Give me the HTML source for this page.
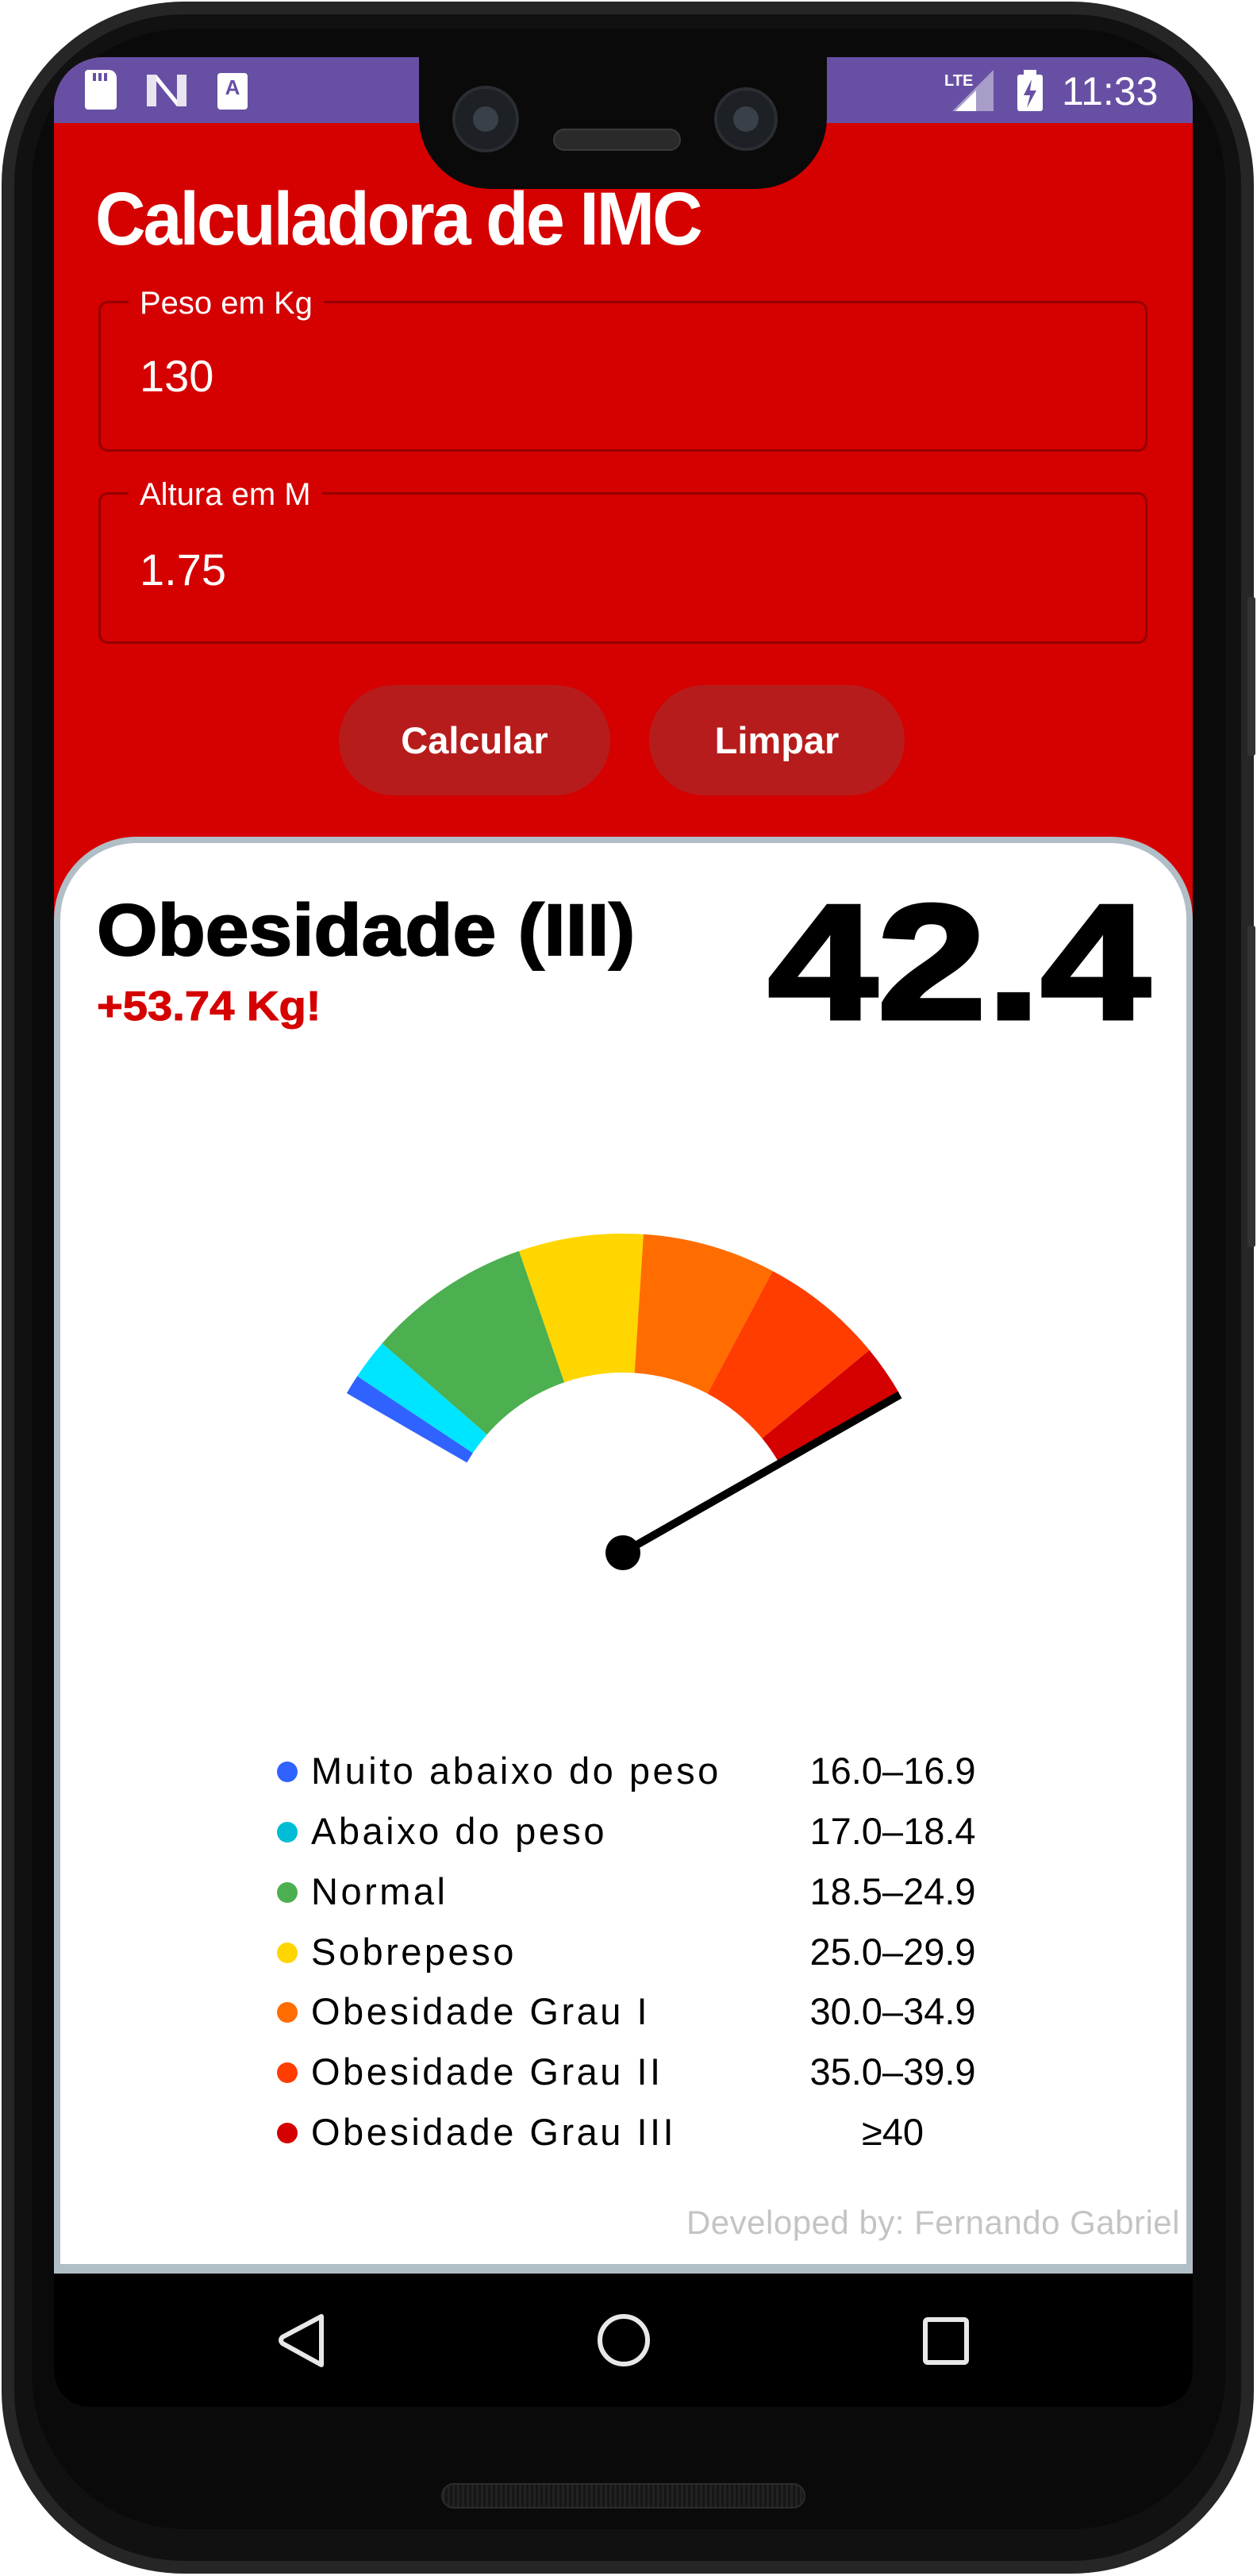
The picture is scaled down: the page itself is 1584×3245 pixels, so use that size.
<!DOCTYPE html>
<html><head><meta charset="utf-8"><style>
*{margin:0;padding:0;box-sizing:border-box}
html,body{width:1584px;height:3245px;background:#fff;overflow:hidden;font-family:"Liberation Sans",sans-serif}
.abs{position:absolute}
</style></head><body>
<div class="abs" style="left:0;top:0;width:1584px;height:3245px;background:#fff"></div>
<!-- phone body -->
<div class="abs" style="left:2px;top:2px;width:1578px;height:3240px;border-radius:230px;background:#262626"></div>
<div class="abs" style="left:18px;top:18px;width:1546px;height:3208px;border-radius:215px;background:#111"></div>
<div class="abs" style="left:40px;top:36px;width:1504px;height:3150px;border-radius:195px;background:#0a0a0a"></div>
<!-- side buttons -->
<div class="abs" style="left:1572px;top:752px;width:10px;height:200px;background:#333;border-radius:3px"></div>
<div class="abs" style="left:1572px;top:1166px;width:10px;height:405px;background:#333;border-radius:3px"></div>
<!-- screen -->
<div class="abs" style="left:68px;top:72px;width:1435px;height:2960px;border-radius:62px 62px 44px 44px;background:#d50000;overflow:hidden">
  <div class="abs" style="left:0;top:0;width:1435px;height:83px;background:#6750a4"></div>
  <div class="abs" style="left:0;top:2790px;width:1435px;height:170px;background:#000"></div>
</div>
<!-- notch -->
<div class="abs" style="left:528px;top:40px;width:514px;height:198px;background:#0a0a0a;border-radius:0 0 90px 90px"></div>
<div class="abs" style="left:570px;top:108px;width:84px;height:84px;border-radius:50%;background:#1d2024;border:4px solid #2a2d31"></div>
<div class="abs" style="left:596px;top:134px;width:32px;height:32px;border-radius:50%;background:#3a4048"></div>
<div class="abs" style="left:900px;top:110px;width:80px;height:80px;border-radius:50%;background:#1d2024;border:4px solid #2a2d31"></div>
<div class="abs" style="left:924px;top:134px;width:32px;height:32px;border-radius:50%;background:#3a4048"></div>
<div class="abs" style="left:697px;top:162px;width:161px;height:28px;border-radius:14px;background:#2a2a2a;border:2px solid #3a3a3a"></div>
<!-- status icons -->
<div class="abs" style="left:107px;top:88px;width:40px;height:50px;background:#fff;border-radius:4px 10px 4px 4px"></div>
<div class="abs" style="left:117px;top:92px;width:20px;height:10px;background:repeating-linear-gradient(90deg,#6750a4 0 4px,#fff 4px 7px)"></div>
<svg class="abs" style="left:183px;top:92px" width="54" height="44"><path d="M2 2 L14 2 L40 34 L40 2 L52 2 L52 42 L40 42 L14 10 L14 42 L2 42Z" fill="#e8e4f0"/><path d="M14 2 L40 34 L40 42 L14 10Z" fill="#fff"/></svg>
<div class="abs" style="left:274px;top:92px;width:38px;height:46px;background:#fff;border-radius:4px;color:#6750a4;font-weight:bold;font-size:26px;text-align:center;line-height:36px">A</div>
<svg class="abs" style="left:1190px;top:86px" width="64" height="56"><text x="0" y="22" fill="#fff" font-family="Liberation Sans" font-size="20" font-weight="bold">LTE</text><path d="M62 2 L62 54 L10 54Z" fill="#a89cc8"/><path d="M40 28 L40 54 L14 54Z" fill="#fff"/></svg>
<div class="abs" style="left:1282px;top:94px;width:32px;height:46px;background:#fff;border-radius:3px"></div>
<div class="abs" style="left:1290px;top:88px;width:16px;height:8px;background:#fff"></div>
<svg class="abs" style="left:1282px;top:94px" width="32" height="46"><path d="M18 6 L8 26 L16 26 L12 42 L24 20 L16 20 Z" fill="#6750a4"/></svg>
<div class="abs" style="left:1338px;top:86px;color:#fff;font-size:50px;line-height:58px">11:33</div>
<!-- title -->
<div class="abs" style="left:120px;top:228px;color:#fff;font-weight:bold;font-size:88px;letter-spacing:-3px;line-height:88px;white-space:nowrap;transform:scaleY(1.08);transform-origin:left top">Calculadora de IMC</div>
<!-- field 1 -->
<div class="abs" style="left:124px;top:379px;width:1322px;height:190px;border:3px solid #950000;border-radius:12px"></div>
<div class="abs" style="left:162px;top:360px;padding:0 14px;background:#d50000;color:#fff;font-size:40px;line-height:44px">Peso em Kg</div>
<div class="abs" style="left:176px;top:442px;color:#fff;font-size:56px;line-height:64px">130</div>
<!-- field 2 -->
<div class="abs" style="left:124px;top:620px;width:1322px;height:191px;border:3px solid #950000;border-radius:12px"></div>
<div class="abs" style="left:162px;top:601px;padding:0 14px;background:#d50000;color:#fff;font-size:40px;line-height:44px">Altura em M</div>
<div class="abs" style="left:176px;top:686px;color:#fff;font-size:56px;line-height:64px">1.75</div>
<!-- buttons -->
<div class="abs" style="left:427px;top:863px;width:342px;height:139px;border-radius:70px;background:#b71c1c;color:#fff;font-weight:bold;font-size:47px;line-height:139px;text-align:center">Calcular</div>
<div class="abs" style="left:818px;top:863px;width:322px;height:139px;border-radius:70px;background:#b71c1c;color:#fff;font-weight:bold;font-size:47px;line-height:139px;text-align:center">Limpar</div>
<!-- card -->
<div class="abs" style="left:68px;top:1054px;width:1435px;height:1810px;background:#b0bec5;border-radius:104px 104px 0 0"></div>
<div class="abs" style="left:76px;top:1062px;width:1419px;height:1790px;background:#fff;border-radius:96px 96px 0 0"></div>
<div class="abs" style="left:122px;top:1122px;color:#000;font-weight:900;font-size:92px;line-height:100px;white-space:nowrap;transform:scaleX(1.07);transform-origin:left top;-webkit-text-stroke:2px #000">Obesidade (III)</div>
<div class="abs" style="left:122px;top:1240px;color:#d50000;font-weight:900;font-size:52px;line-height:56px;white-space:nowrap;transform:scaleX(1.08);transform-origin:left top;-webkit-text-stroke:1px #d50000">+53.74 Kg!</div>
<div class="abs" style="left:968px;top:1102px;color:#000;font-weight:900;font-size:206px;line-height:220px;white-space:nowrap;transform:scaleX(1.2);transform-origin:left top;-webkit-text-stroke:5px #000">42.4</div>
<!-- gauge -->
<svg class="abs" style="left:0;top:0" width="1584" height="3245">
<path d="M436.9 1755 A402 402 0 0 1 450.2 1733.5 L595.9 1830.4 A227 227 0 0 0 588.4 1842.5Z" fill="#2f62ff"/>
<path d="M450.2 1733.5 A402 402 0 0 1 481.6 1692.2 L613.7 1807.1 A227 227 0 0 0 595.9 1830.4Z" fill="#00e5ff"/>
<path d="M481.6 1692.2 A402 402 0 0 1 654.1 1575.9 L711.1 1741.4 A227 227 0 0 0 613.7 1807.1Z" fill="#4caf50"/>
<path d="M654.1 1575.9 A402 402 0 0 1 810.9 1554.8 L799.6 1729.5 A227 227 0 0 0 711.1 1741.4Z" fill="#ffd600"/>
<path d="M810.9 1554.8 A402 402 0 0 1 973.7 1601.1 L891.6 1755.6 A227 227 0 0 0 799.6 1729.5Z" fill="#ff6d00"/>
<path d="M973.7 1601.1 A402 402 0 0 1 1095.6 1700.8 L960.4 1811.9 A227 227 0 0 0 891.6 1755.6Z" fill="#ff3d00"/>
<path d="M1095.6 1700.8 A402 402 0 0 1 1133.1 1755 L981.6 1842.5 A227 227 0 0 0 960.4 1811.9Z" fill="#d50000"/>
<line x1="785" y1="1956" x2="1134" y2="1757" stroke="#000" stroke-width="10"/>
<circle cx="785" cy="1956" r="22" fill="#000"/>
<!-- nav icons -->
<path d="M405 2918 L405 2979 L356 2952 Q352 2948 356 2944 Z" fill="none" stroke="#e8e8e8" stroke-width="6" stroke-linejoin="round"/>
<circle cx="786" cy="2948" r="30" fill="none" stroke="#e8e8e8" stroke-width="6"/>
<rect x="1166" y="2922" width="52" height="54" rx="3" fill="none" stroke="#e8e8e8" stroke-width="6"/>
</svg>
<!-- legend -->
<div class="abs" style="left:0;top:0;width:1584px;height:3245px;font-size:47px;letter-spacing:3.5px;color:#000">
  <div class="abs" style="left:349px;top:2219px;width:26px;height:26px;border-radius:50%;background:#2f62ff"></div>
  <div class="abs" style="left:392px;top:2205px;line-height:52px;white-space:nowrap">Muito abaixo do peso</div>
  <div class="abs" style="left:1000px;top:2205px;width:250px;text-align:center;line-height:52px;letter-spacing:0">16.0–16.9</div>
  <div class="abs" style="left:349px;top:2295px;width:26px;height:26px;border-radius:50%;background:#00bcd4"></div>
  <div class="abs" style="left:392px;top:2281px;line-height:52px;white-space:nowrap">Abaixo do peso</div>
  <div class="abs" style="left:1000px;top:2281px;width:250px;text-align:center;line-height:52px;letter-spacing:0">17.0–18.4</div>
  <div class="abs" style="left:349px;top:2371px;width:26px;height:26px;border-radius:50%;background:#4caf50"></div>
  <div class="abs" style="left:392px;top:2357px;line-height:52px;white-space:nowrap">Normal</div>
  <div class="abs" style="left:1000px;top:2357px;width:250px;text-align:center;line-height:52px;letter-spacing:0">18.5–24.9</div>
  <div class="abs" style="left:349px;top:2447px;width:26px;height:26px;border-radius:50%;background:#ffd600"></div>
  <div class="abs" style="left:392px;top:2433px;line-height:52px;white-space:nowrap">Sobrepeso</div>
  <div class="abs" style="left:1000px;top:2433px;width:250px;text-align:center;line-height:52px;letter-spacing:0">25.0–29.9</div>
  <div class="abs" style="left:349px;top:2522px;width:26px;height:26px;border-radius:50%;background:#ff6d00"></div>
  <div class="abs" style="left:392px;top:2508px;line-height:52px;white-space:nowrap">Obesidade Grau I</div>
  <div class="abs" style="left:1000px;top:2508px;width:250px;text-align:center;line-height:52px;letter-spacing:0">30.0–34.9</div>
  <div class="abs" style="left:349px;top:2598px;width:26px;height:26px;border-radius:50%;background:#ff3d00"></div>
  <div class="abs" style="left:392px;top:2584px;line-height:52px;white-space:nowrap">Obesidade Grau II</div>
  <div class="abs" style="left:1000px;top:2584px;width:250px;text-align:center;line-height:52px;letter-spacing:0">35.0–39.9</div>
  <div class="abs" style="left:349px;top:2674px;width:26px;height:26px;border-radius:50%;background:#d50000"></div>
  <div class="abs" style="left:392px;top:2660px;line-height:52px;white-space:nowrap">Obesidade Grau III</div>
  <div class="abs" style="left:1000px;top:2660px;width:250px;text-align:center;line-height:52px;letter-spacing:0">≥40</div>
</div>
<div class="abs" style="left:700px;top:2776px;width:787px;text-align:right;color:#c4c4c4;font-size:42px;letter-spacing:0.5px;line-height:48px;white-space:nowrap">Developed by: Fernando Gabriel</div>
<!-- bottom speaker -->
<div class="abs" style="left:556px;top:3128px;width:459px;height:32px;border-radius:16px;background:repeating-linear-gradient(90deg,#222 0 3px,#161616 3px 6px);border:2px solid #2c2c2c"></div>
</body></html>
